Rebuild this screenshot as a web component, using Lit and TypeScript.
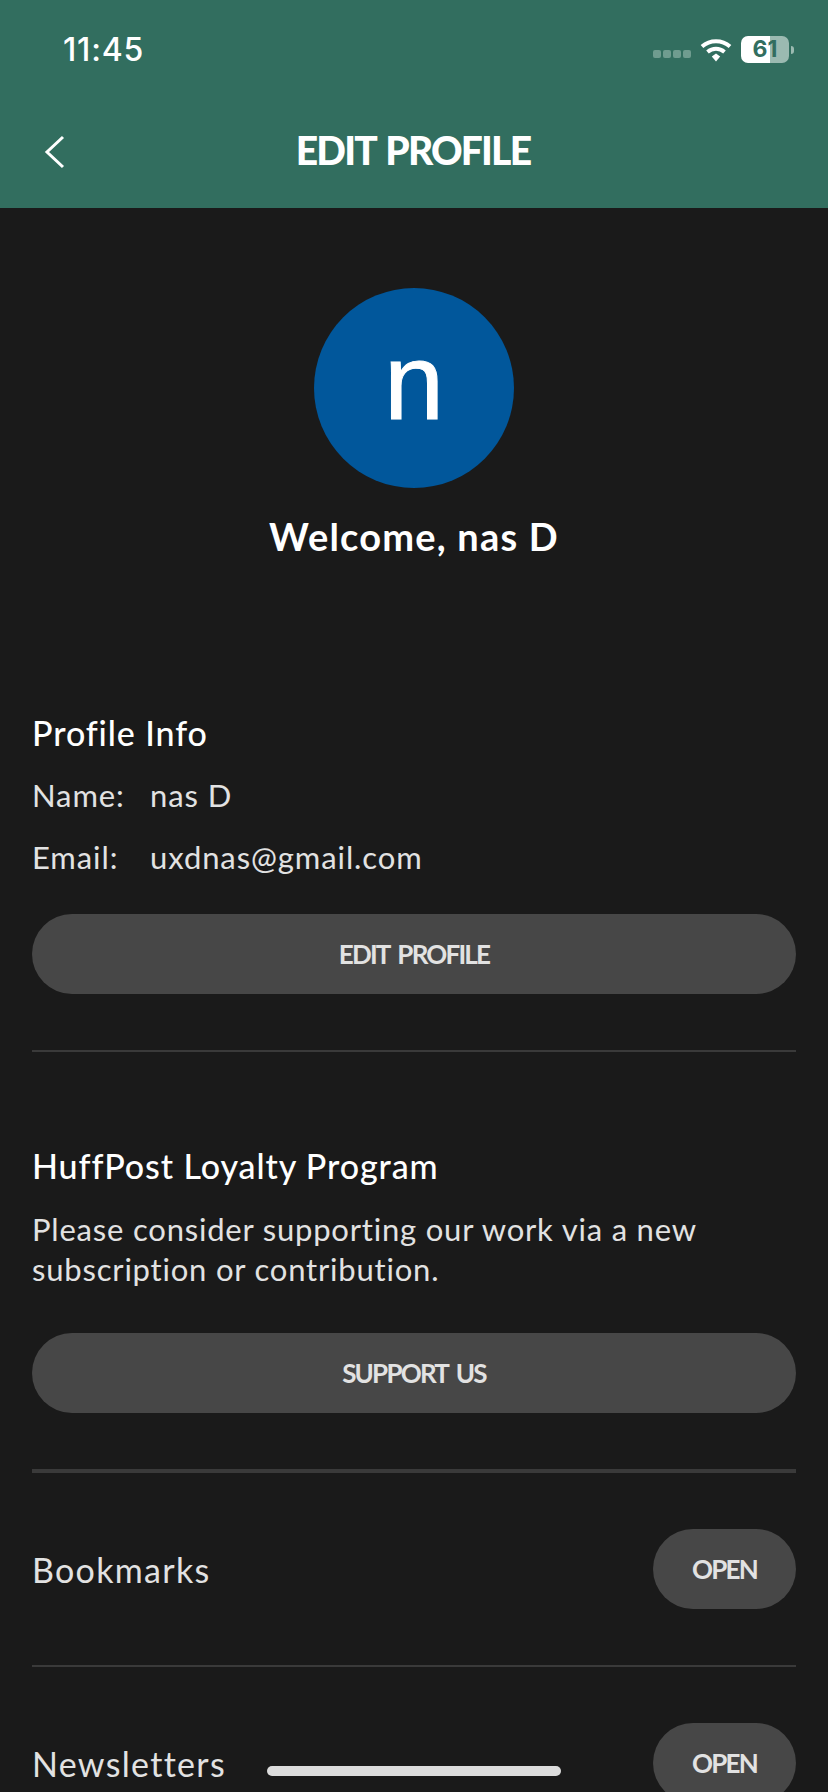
import { LitElement, html, css } from 'lit';
import { customElement } from 'lit/decorators.js';

@customElement('app-root')
export class AppRoot extends LitElement {
  static styles = css`
    :host {
      display: block;
      width: 828px;
      height: 1792px;
      overflow: hidden;
      position: relative;
      background: #1a1a1a;
      font-family: Lato, 'Open Sans', sans-serif;
      color: #e2e2e2;
    }

    /* Header */
    .header {
      height: 208px;
      background: #326e5f;
      color: #fff;
    }
    .status {
      height: 99px;
      display: flex;
      align-items: center;
      padding: 0 34px 0 63px;
    }
    .time {
      font-family: Inter, sans-serif;
      font-size: 32px;
      font-weight: 500;
      letter-spacing: 0.8px;
      flex: 1;
    }
    .dots {
      display: flex;
      gap: 2px;
      margin: 9px 9px 0 0;
    }
    .dots i {
      width: 8px;
      height: 8px;
      border-radius: 2px;
      background: #6f9c8f;
    }
    .wifi {
      width: 32px;
      height: 24px;
      margin: 0 9px 0 0;
    }
    .battery {
      width: 48px;
      height: 27px;
      border-radius: 7px;
      background: linear-gradient(90deg, #fff 60%, #9bbab1 60%);
      color: #326e5f;
      font: 700 23px/27px Inter, sans-serif;
      text-align: center;
    }
    .nub {
      width: 3px;
      height: 8px;
      margin-left: 2px;
      border-radius: 0 3px 3px 0;
      background: #9bbab1;
    }
    .nav {
      height: 103px;
      position: relative;
      display: flex;
      align-items: center;
      justify-content: center;
    }
    .back {
      position: absolute;
      left: 44px;
      top: 36px;
      width: 22px;
      height: 34px;
    }
    .title {
      font-size: 39px;
      font-weight: 900;
      letter-spacing: -1.8px;
      word-spacing: 3px;
      margin: 0 2px 2px 0;
    }

    /* Profile head */
    .profile {
      display: flex;
      flex-direction: column;
      align-items: center;
      padding-top: 80px;
    }
    .avatar {
      width: 200px;
      height: 200px;
      border-radius: 50%;
      background: #01579b;
      color: #fff;
      display: flex;
      align-items: center;
      justify-content: center;
      font: 400 108px/1 'Liberation Sans', sans-serif;
      -webkit-text-stroke: 1px #fff;
      padding-bottom: 12px;
      box-sizing: border-box;
    }
    .welcome {
      margin-top: 26px;
      font-size: 38px;
      line-height: 44px;
      font-weight: 700;
      letter-spacing: 1.2px;
      color: #fff;
    }

    /* Content */
    .content {
      padding: 0 32px;
    }
    h2 {
      margin: 0;
      font-size: 34px;
      line-height: 40px;
      font-weight: 500;
      letter-spacing: 0.9px;
      color: #fff;
    }
    .info {
      margin-top: 155px;
    }
    .row {
      display: grid;
      grid-template-columns: 118px 1fr;
      font-size: 31px;
      line-height: 40px;
      letter-spacing: 0.9px;
      margin-top: 22px;
    }
    .btn {
      height: 80px;
      border-radius: 40px;
      background: #474747;
      color: #e2e2e2;
      display: flex;
      align-items: center;
      justify-content: center;
      font-size: 26px;
      font-weight: 700;
      letter-spacing: -1.8px;
      word-spacing: 4px;
    }
    .info .btn {
      margin-top: 37px;
    }
    hr {
      border: 0;
      margin: 0;
      height: 2px;
      background: #3a3a3a;
    }
    .info hr {
      margin-top: 56px;
    }
    .loyalty {
      margin-top: 94px;
    }
    .loyalty p {
      margin: 23px 0 0;
      font-size: 31px;
      line-height: 40px;
      letter-spacing: 0.8px;
    }
    .loyalty .btn {
      margin-top: 44px;
    }
    .loyalty hr {
      margin-top: 56px;
      height: 4px;
    }
    .link {
      display: flex;
      align-items: center;
      justify-content: space-between;
      font-size: 34px;
      letter-spacing: 1.3px;
      padding: 56px 0;
    }
    .link .btn {
      width: 143px;
    }
    .home {
      position: absolute;
      left: 267px;
      top: 1766px;
      width: 294px;
      height: 10px;
      border-radius: 5px;
      background: #dcdcdc;
    }
  `;

  render() {
    return html`
      <div class="header">
        <div class="status">
          <span class="time">11:45</span>
          <span class="dots"><i></i><i></i><i></i><i></i></span>
          <svg class="wifi" viewBox="0 0 32 24" fill="none" stroke="#fff" stroke-width="4">
            <path d="M2 8.5C10 1.5 22 1.5 30 8.5" />
            <path d="M7.5 14C12.5 9.8 19.5 9.8 24.5 14" />
            <path d="M11.8 18.5L16 15.5L20.2 18.5L16 23.5Z" fill="#fff" stroke="none" />
          </svg>
          <span class="battery">61</span>
          <span class="nub"></span>
        </div>
        <div class="nav">
          <svg class="back" viewBox="0 0 22 34" fill="none" stroke="#fff" stroke-width="3">
            <path d="M19 2L3 17L19 32" />
          </svg>
          <span class="title">EDIT PROFILE</span>
        </div>
      </div>

      <div class="profile">
        <div class="avatar">n</div>
        <div class="welcome">Welcome, nas D</div>
      </div>

      <div class="content">
        <section class="info">
          <h2>Profile Info</h2>
          <div class="row"><span>Name:</span><span>nas D</span></div>
          <div class="row"><span>Email:</span><span>uxdnas@gmail.com</span></div>
          <div class="btn">EDIT PROFILE</div>
          <hr />
        </section>

        <section class="loyalty">
          <h2>HuffPost Loyalty Program</h2>
          <p>Please consider supporting our work via a new<br />subscription or contribution.</p>
          <div class="btn">SUPPORT US</div>
          <hr />
        </section>

        <div class="link"><span>Bookmarks</span><span class="btn">OPEN</span></div>
        <hr />
        <div class="link"><span>Newsletters</span><span class="btn">OPEN</span></div>
      </div>

      <div class="home"></div>
    `;
  }
}
